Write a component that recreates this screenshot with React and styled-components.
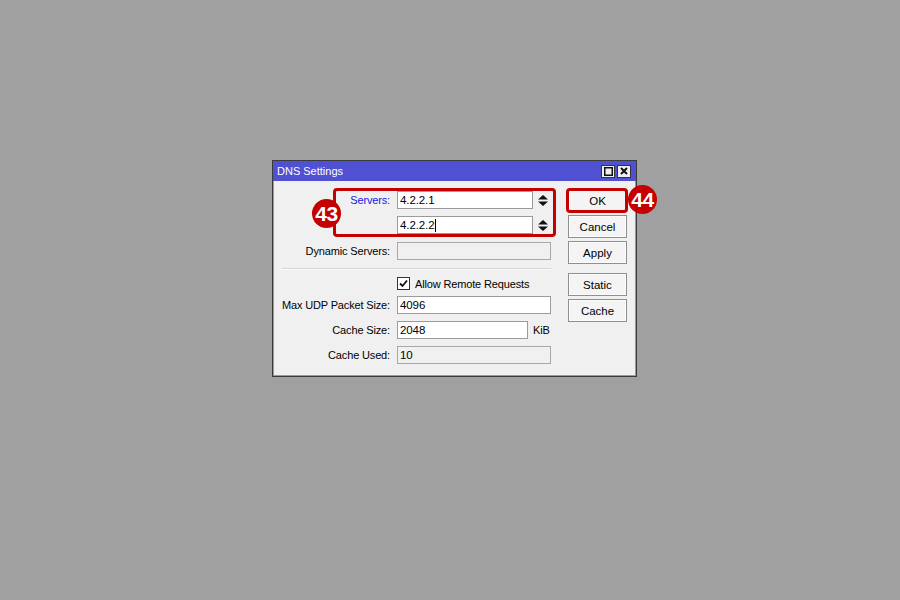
import React from 'react';
import styled, { createGlobalStyle } from 'styled-components';

const GlobalStyle = createGlobalStyle`
  html, body {
    margin: 0;
    padding: 0;
    background: #a0a0a0;
  }
  * {
    box-sizing: border-box;
  }
`;

const Page = styled.div`
  width: 900px;
  height: 600px;
  padding: 160px 0 0 272px;
  font-family: "Liberation Sans", Arial, sans-serif;
  font-size: 11px;
  color: #000;
`;

const Window = styled.div`
  position: relative;
  width: 365px;
  border: 1px solid #3a3a3a;
  background: #f0f0f0;
`;

const TitleBar = styled.div`
  height: 20px;
  background: #5050d2;
  display: flex;
  align-items: center;
  justify-content: space-between;
  padding: 0 5px 0 4px;
`;

const Title = styled.span`
  color: #fff;
  font-size: 11px;
`;

const TitleButtons = styled.div`
  display: flex;
  gap: 2px;
`;

const TitleButton = styled.div`
  width: 14px;
  height: 13px;
  background: #f0f0f0;
  border: 1px solid #333;
  display: flex;
  align-items: center;
  justify-content: center;
`;

const Body = styled.div`
  display: flex;
  padding: 8px 9px 12px 7px;
  gap: 17px;
  box-shadow: inset 1px 0 0 #9a9a9a, inset -1px 0 0 #9a9a9a, inset 0 -1px 0 #9a9a9a;
`;

const Form = styled.div`
  margin-top: 2px;
  width: 271px;
  display: flex;
  flex-direction: column;
`;

const Row = styled.div`
  display: flex;
  align-items: center;
  height: ${(p) => (p.$short ? '13px' : '18px')};
  margin-top: ${(p) => p.$mt || 0}px;
  gap: 7px;
`;

const Label = styled.span`
  width: 110px;
  flex-shrink: 0;
  text-align: right;
  letter-spacing: -0.15px;
  white-space: nowrap;
  color: ${(p) => (p.$active ? '#1818e8' : '#000')};
`;

const Field = styled.div`
  display: flex;
  align-items: center;
  gap: 5px;
`;

const Input = styled.div`
  width: ${(p) => p.$w || 154}px;
  height: 18px;
  border: 1px solid ${(p) => (p.$disabled ? '#a8a8a8' : '#9a9a9a')};
  background: ${(p) => (p.$disabled ? '#f0f0f0' : '#fff')};
  padding: 0 2px;
  display: flex;
  align-items: center;
  letter-spacing: -0.1px;
  font-size: 11.5px;
`;

const Caret = styled.span`
  display: inline-block;
  width: 1px;
  height: 13px;
  background: #000;
  margin-left: 1px;
`;

const Unit = styled.span`
  letter-spacing: -0.2px;
`;

const Separator = styled.div`
  height: 2px;
  margin: 8px 0 0 2px;
  border-top: 1px solid #d6d6d6;
  border-bottom: 1px solid #fbfbfb;
`;

const CheckRow = styled.label`
  display: flex;
  align-items: center;
  gap: 5px;
  margin-left: 117px;
  letter-spacing: -0.15px;
`;

const CheckBox = styled.span`
  width: 13px;
  height: 13px;
  border: 1px solid #333;
  background: #fff;
  display: flex;
  align-items: center;
  justify-content: center;
`;

const ButtonColumn = styled.div`
  display: flex;
  flex-direction: column;
  gap: 3px;
`;

const Button = styled.div`
  width: 59px;
  height: 23px;
  margin-top: ${(p) => p.$mt || 0}px;
  border: 1px solid #8f8f8f;
  background: #f4f4f4;
  box-shadow: inset 0 0 0 1px #fcfcfc;
  display: flex;
  align-items: center;
  justify-content: center;
  font-size: 11.5px;
`;

const Highlight = styled.div`
  position: absolute;
  left: ${(p) => p.$x}px;
  top: ${(p) => p.$y}px;
  width: ${(p) => p.$w}px;
  height: ${(p) => p.$h}px;
  border: 3px solid #c40000;
  border-radius: 4px;
  pointer-events: none;
`;

const Badge = styled.div`
  position: absolute;
  left: ${(p) => p.$x}px;
  top: ${(p) => p.$y}px;
  width: 29px;
  height: 29px;
  border-radius: 50%;
  background: #c40000;
  color: #fff;
  font-family: "Liberation Sans", Arial, sans-serif;
  font-weight: bold;
  font-size: 21px;
  letter-spacing: -0.5px;
  display: flex;
  align-items: center;
  justify-content: center;
`;

const Spinner = () => (
  <svg width="10" height="11" viewBox="0 0 10 11">
    <polygon points="0,4.5 5,0 10,4.5" fill="#111" />
    <polygon points="0,6.5 10,6.5 5,11" fill="#111" />
  </svg>
);

const App = () => (
  <Page>
    <GlobalStyle />
    <Window>
      <TitleBar>
        <Title>DNS Settings</Title>
        <TitleButtons>
          <TitleButton>
            <svg width="9" height="9" viewBox="0 0 9 9">
              <rect x="0.75" y="0.75" width="7.5" height="7.5" fill="none" stroke="#111" strokeWidth="1.5" />
            </svg>
          </TitleButton>
          <TitleButton>
            <svg width="8" height="8" viewBox="0 0 8 8">
              <path d="M1 1 L7 7 M7 1 L1 7" stroke="#111" strokeWidth="2" />
            </svg>
          </TitleButton>
        </TitleButtons>
      </TitleBar>
      <Body>
        <Form>
          <Row>
            <Label $active>Servers:</Label>
            <Field>
              <Input $w={136}>4.2.2.1</Input>
              <Spinner />
            </Field>
          </Row>
          <Row $mt={7}>
            <Label />
            <Field>
              <Input $w={136}>
                4.2.2.2<Caret />
              </Input>
              <Spinner />
            </Field>
          </Row>
          <Row $mt={8}>
            <Label>Dynamic Servers:</Label>
            <Input $disabled />
          </Row>
          <Separator />
          <Row $short $mt={7}>
            <CheckRow>
              <CheckBox>
                <svg width="9" height="9" viewBox="0 0 9 9">
                  <path d="M1 4.5 L3.5 7 L8 1.5" fill="none" stroke="#111" strokeWidth="1.8" />
                </svg>
              </CheckBox>
              Allow Remote Requests
            </CheckRow>
          </Row>
          <Row $mt={6}>
            <Label>Max UDP Packet Size:</Label>
            <Input>4096</Input>
          </Row>
          <Row $mt={7}>
            <Label>Cache Size:</Label>
            <Field>
              <Input $w={131}>2048</Input>
              <Unit>KiB</Unit>
            </Field>
          </Row>
          <Row $mt={7}>
            <Label>Cache Used:</Label>
            <Input $disabled>10</Input>
          </Row>
        </Form>
        <ButtonColumn>
          <Button>OK</Button>
          <Button>Cancel</Button>
          <Button>Apply</Button>
          <Button $mt={6}>Static</Button>
          <Button>Cache</Button>
        </ButtonColumn>
      </Body>
      <Highlight $x={60} $y={27} $w={223} $h={49} />
      <Highlight $x={293} $y={27} $w={62} $h={25} />
      <Badge $x={39} $y={38}>43</Badge>
      <Badge $x={355} $y={24}>44</Badge>
    </Window>
  </Page>
);

export default App;
